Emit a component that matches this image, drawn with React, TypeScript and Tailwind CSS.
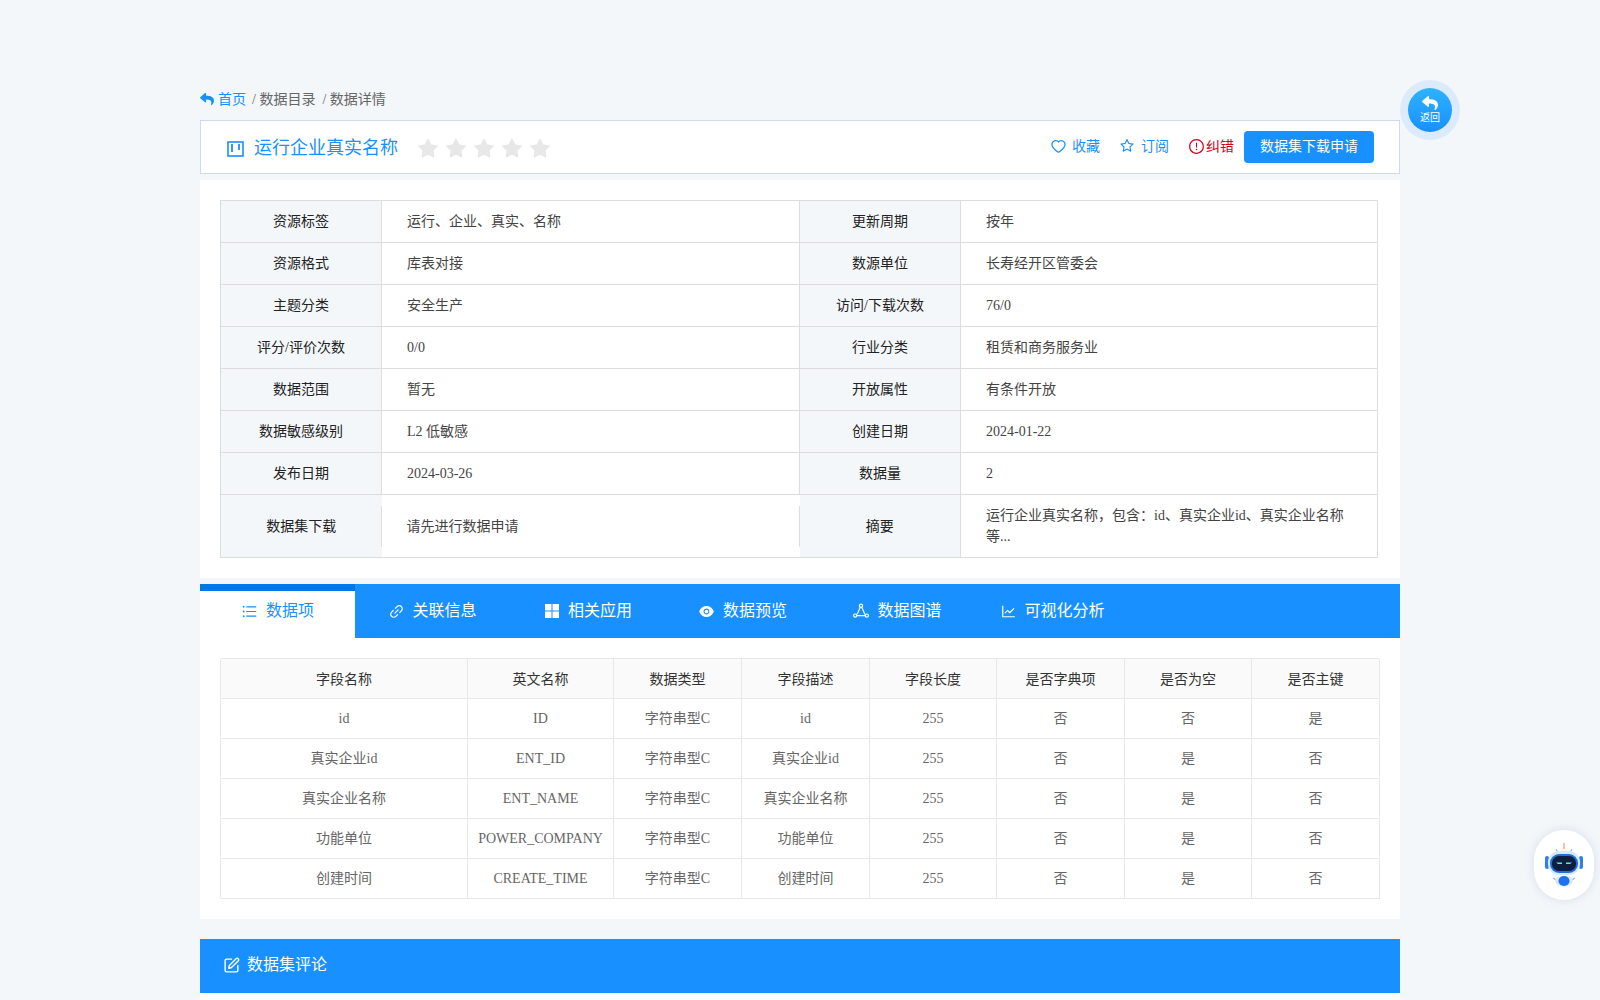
import React from 'react'
import { FaReply } from 'react-icons/fa'
import {
  AiFillStar,
  AiOutlineHeart,
  AiOutlineStar,
  AiOutlineExclamationCircle,
  AiOutlineUnorderedList,
  AiOutlineLink,
  AiFillEye,
  AiOutlineLineChart,
} from 'react-icons/ai'
import { SquarePen } from 'lucide-react'

const details = [
  ['资源标签', '运行、企业、真实、名称', '更新周期', '按年'],
  ['资源格式', '库表对接', '数源单位', '长寿经开区管委会'],
  ['主题分类', '安全生产', '访问/下载次数', '76/0'],
  ['评分/评价次数', '0/0', '行业分类', '租赁和商务服务业'],
  ['数据范围', '暂无', '开放属性', '有条件开放'],
  ['数据敏感级别', 'L2 低敏感', '创建日期', '2024-01-22'],
  ['发布日期', '2024-03-26', '数据量', '2'],
]

const fields = [
  ['id', 'ID', '字符串型C', 'id', '255', '否', '否', '是'],
  ['真实企业id', 'ENT_ID', '字符串型C', '真实企业id', '255', '否', '是', '否'],
  ['真实企业名称', 'ENT_NAME', '字符串型C', '真实企业名称', '255', '否', '是', '否'],
  ['功能单位', 'POWER_COMPANY', '字符串型C', '功能单位', '255', '否', '是', '否'],
  ['创建时间', 'CREATE_TIME', '字符串型C', '创建时间', '255', '否', '是', '否'],
]

const heads = ['字段名称', '英文名称', '数据类型', '字段描述', '字段长度', '是否字典项', '是否为空', '是否主键']
const colW = ['w-[247px]', 'w-[146px]', 'w-[128px]', 'w-[128px]', 'w-[127px]', 'w-[128px]', 'w-[127px]', 'w-[128px]']

function BoardIcon() {
  return (
    <svg width="17" height="16" viewBox="0 0 17 16" fill="none" stroke="currentColor">
      <rect x="1" y="1" width="15" height="14" strokeWidth="1.6" />
      <path d="M5 3v8M12 3v6" strokeWidth="1.8" />
    </svg>
  )
}

function GridIcon() {
  return (
    <svg width="14" height="14" viewBox="0 0 14 14" fill="currentColor">
      <rect x="0" y="0" width="6.5" height="6.5" />
      <rect x="7.5" y="0" width="6.5" height="6.5" />
      <rect x="0" y="7.5" width="6.5" height="6.5" />
      <rect x="7.5" y="7.5" width="6.5" height="6.5" />
    </svg>
  )
}

function GraphIcon() {
  return (
    <svg width="16" height="16" viewBox="0 0 16 16" fill="none" stroke="currentColor" strokeWidth="1.2">
      <circle cx="8" cy="2.8" r="1.6" />
      <circle cx="2.2" cy="12.6" r="1.6" />
      <circle cx="13.8" cy="12.6" r="1.6" />
      <path d="M7.2 4.3 4.2 11.2M8.8 4.3l3 6.9M3.9 12.6h8.2" strokeWidth="1.1" />
    </svg>
  )
}

function Robot() {
  return (
    <svg width="40" height="44" viewBox="0 0 40 44">
      <rect x="19.3" y="0" width="1.4" height="6" fill="#f0a58f" />
      <path d="M12 6l2 4M28 6l-2 4" stroke="#8fb8ee" strokeWidth="1.2" />
      <rect x="1" y="13" width="4" height="13" rx="2" fill="#2f7fe8" />
      <rect x="35" y="13" width="4" height="13" rx="2" fill="#2f7fe8" />
      <rect x="4" y="8" width="32" height="24" rx="11" fill="#d9e9fb" />
      <rect x="6" y="11" width="28" height="19" rx="9" fill="#1f6fe0" />
      <rect x="8" y="13" width="24" height="15" rx="7" fill="#0d1f3c" />
      <path d="M12 19.5h6v1.6h-4zM28 19.5h-6v1.6h4z" fill="#5fe3e0" />
      <path d="M9 35l3 2M31 35l-3 2" stroke="#8fb8ee" strokeWidth="1.4" />
      <ellipse cx="20" cy="38" rx="9" ry="5.5" fill="#dbe9fb" />
      <ellipse cx="20" cy="38" rx="5.5" ry="5" fill="#1d72f0" />
    </svg>
  )
}

export default function App() {
  return (
    <div className="min-h-[1000px] bg-[#f4f7fa] font-['Liberation_Serif','Noto_Sans_CJK_SC',serif] text-[14px] text-[#333]">
      <div className="mx-auto w-[1200px] pt-[89px]">
        {/* breadcrumb */}
        <div className="flex h-[20px] items-center text-[#666]">
          <span className="flex items-center gap-[4px] text-[#1890ff]">
            <FaReply size={14} />
            首页
          </span>
          <span className="ml-[6px]">/ 数据目录</span>
          <span className="ml-[7px]">/ 数据详情</span>
        </div>

        {/* title bar */}
        <div className="mt-[11px] flex h-[54px] items-center border border-[#cfdbe8] bg-white pl-[26px] pr-[25px]">
          <div className="mt-[3px] flex items-center text-[#1890ff]">
            <BoardIcon />
            <span className="ml-[10px] text-[18px]">运行企业真实名称</span>
            <div className="ml-[18px] flex gap-[4px] text-[#e8e8e8]">
              {[0, 1, 2, 3, 4].map((i) => (
                <AiFillStar key={i} size={24} />
              ))}
            </div>
          </div>
          <div className="ml-auto flex items-center text-[#1890ff]">
            <div className="mb-[2px] flex items-center">
              <AiOutlineHeart size={17} />
              <span className="ml-[5px]">收藏</span>
              <AiOutlineStar size={16} className="ml-[19px]" />
              <span className="ml-[6px]">订阅</span>
              <span className="ml-[19px] flex items-center text-[#d0021b]">
                <AiOutlineExclamationCircle size={17} />
                <span className="ml-[1px]">纠错</span>
              </span>
            </div>
            <button className="ml-[10px] h-[32px] w-[130px] rounded-[4px] bg-[#1890ff] pb-[2px] text-white shadow-[0_2px_0_rgba(0,0,0,0.04)]">
              数据集下载申请
            </button>
          </div>
        </div>

        {/* detail table */}
        <div className="mt-[6px] bg-white px-[20px] pb-[20px] pt-[20px]">
          <table className="w-[1157px] table-fixed border-collapse border border-[#ddd]">
            <colgroup>
              <col className="w-[161px]" />
              <col className="w-[418px]" />
              <col className="w-[161px]" />
              <col className="w-[417px]" />
            </colgroup>
            <tbody>
              {details.map((row) => (
                <tr key={row[0]} className="h-[42px] border-b border-[#ddd]">
                  <td className="border-r border-[#ddd] bg-[#f4f7fa] text-center text-[#222]">{row[0]}</td>
                  <td className="border-r border-[#ddd] pl-[25px] text-[#444]">{row[1]}</td>
                  <td className="border-r border-[#ddd] bg-[#f4f7fa] text-center text-[#222]">{row[2]}</td>
                  <td className="pl-[25px] text-[#444]">{row[3]}</td>
                </tr>
              ))}
              <tr className="h-[63px]">
                <td className="bg-[#f4f7fa] text-center text-[#222]">数据集下载</td>
                <td className="p-0 pt-[1px]">
                  <div className="-ml-px flex h-[41px] items-center border-x border-[#ddd] pl-[25px] text-[#444]">请先进行数据申请</div>
                </td>
                <td className="border-r border-[#ddd] bg-[#f4f7fa] text-center text-[#222]">摘要</td>
                <td className="pl-[25px] pr-[25px] leading-[21px] text-[#444]">
                  运行企业真实名称，包含：id、真实企业id、真实企业名称等...
                </td>
              </tr>
            </tbody>
          </table>
        </div>

        {/* tabs */}
        <div className="mt-[6px] flex h-[54px] bg-[#1890ff] text-[16px] text-white">
          <div className="flex w-[155px] items-center justify-center gap-[8px] border-t-[7px] border-[#0077e6] bg-white pb-[7px] text-[#1890ff]">
            <AiOutlineUnorderedList size={17} />
            数据项
          </div>
          <div className="flex w-[155px] items-center justify-center gap-[7px]">
            <AiOutlineLink size={17} />
            关联信息
          </div>
          <div className="flex w-[155px] items-center justify-center gap-[9px] pl-[2px]">
            <GridIcon />
            相关应用
          </div>
          <div className="flex w-[155px] items-center justify-center gap-[8px]">
            <AiFillEye size={17} />
            数据预览
          </div>
          <div className="flex w-[155px] items-center justify-center gap-[8px]">
            <GraphIcon />
            数据图谱
          </div>
          <div className="flex w-[155px] items-center justify-center gap-[7px]">
            <AiOutlineLineChart size={17} />
            可视化分析
          </div>
        </div>

        {/* fields */}
        <div className="bg-white px-[20px] pb-[20px] pt-[20px]">
          <table className="w-[1159px] table-fixed border-separate border-spacing-0 rounded-[2px] border-l border-t border-[#e8e8e8] text-center">
            <colgroup>
              {colW.map((w, i) => (
                <col key={i} className={w} />
              ))}
            </colgroup>
            <thead>
              <tr className="h-[40px] bg-[#fafafa] text-[#333]">
                {heads.map((h) => (
                  <th key={h} className="border-b border-r border-[#e8e8e8] pt-[1px] font-normal">
                    {h}
                  </th>
                ))}
              </tr>
            </thead>
            <tbody>
              {fields.map((row) => (
                <tr key={row[0]} className="h-[40px] text-[#666]">
                  {row.map((c, i) => (
                    <td key={i} className="border-b border-r border-[#e8e8e8]">
                      {c}
                    </td>
                  ))}
                </tr>
              ))}
            </tbody>
          </table>
        </div>

        {/* comments */}
        <div className="mt-[20px] flex h-[54px] items-center bg-[#1890ff] pb-[2px] pl-[23px] text-[16px] text-white">
          <SquarePen size={17} />
          <span className="ml-[7px]">数据集评论</span>
        </div>
        <div className="h-[7px] bg-white" />
      </div>

      {/* floating buttons */}
      <div className="fixed left-[1400px] top-[80px] flex h-[60px] w-[60px] items-center justify-center rounded-full bg-[#dcebfb]">
        <div className="flex h-[44px] w-[44px] flex-col items-center justify-center rounded-full bg-gradient-to-b from-[#2fb2ff] to-[#1890ff] pb-[2px] text-white">
          <FaReply size={16} />
          <span className="mt-[1px] text-[10px] leading-[12px]">返回</span>
        </div>
      </div>
      <div className="fixed left-[1534px] top-[830px] flex h-[70px] w-[60px] items-center justify-center rounded-[30px] bg-white shadow-[0_0_10px_rgba(120,150,190,0.25)]">
        <Robot />
      </div>
    </div>
  )
}
